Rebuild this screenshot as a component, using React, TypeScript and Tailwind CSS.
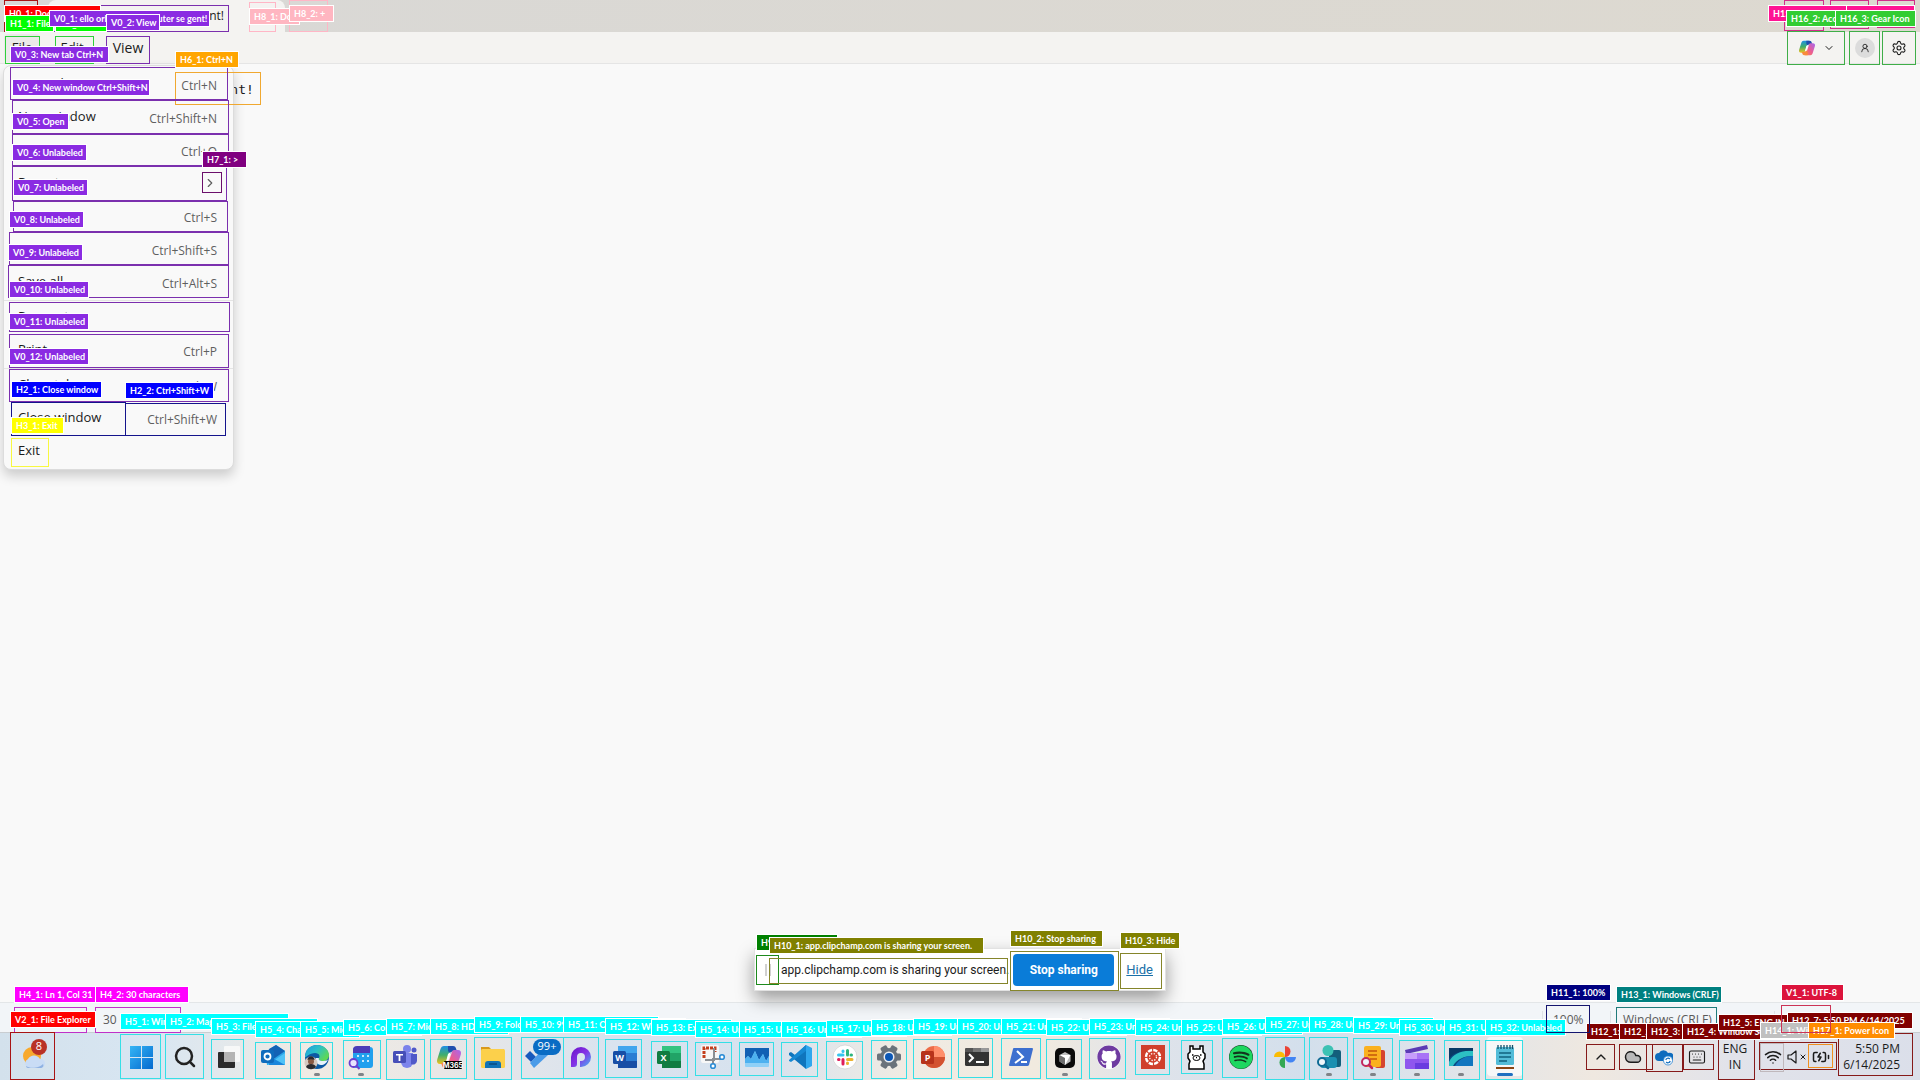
import React from "react";
import {
  ChevronDown,
  ChevronRight,
  ChevronUp,
  Cloud,
  Keyboard,
  Search,
  Settings,
  UserRound,
  Volume,
  Wifi,
  X,
  BatteryCharging,
} from "lucide-react";
import { FaGithub, FaSpotify } from "react-icons/fa";

/* ---------- Taskbar icons ---------- */

const G = ({ children }: { children: React.ReactNode }) => (
  <svg viewBox="0 0 24 24" className="h-6 w-6 overflow-visible" aria-hidden="true">
    {children}
  </svg>
);

const StartIcon = () => (
  <G>
    <defs>
      <linearGradient id="start" x1="0" y1="0" x2="1" y2="1">
        <stop offset="0" stopColor="#35b5f5" />
        <stop offset="1" stopColor="#0469cf" />
      </linearGradient>
    </defs>
    <path fill="url(#start)" d="M1 1h11v11H1zM13 1h11v11H13zM1 13h11v11H1zM13 13h11v11H13z" />
  </G>
);
const TaskViewIcon = () => (
  <G>
    <rect x="1" y="7" width="17" height="16" rx="1" fill="#2b2b2b" />
    <rect x="7" y="1" width="16" height="16" rx="1" fill="#fafafa" opacity=".85" />
    <path d="M7 7h11v10H7z" fill="#b4b4b4" />
  </G>
);
const OutlookIcon = () => (
  <G>
    <path d="M4 7 15 0l9 6v14H6z" fill="#2ba5e8" />
    <path d="m8 4 7-4 9 6-13 9z" fill="#1362b5" />
    <path d="M6 20 24 8v12z" fill="#4fc3f7" />
    <path d="M8 11 24 20H8z" fill="#1a86dc" />
    <rect x="0" y="5" width="13" height="13" rx="2" fill="#0f6cbd" />
    <circle cx="6.500" cy="11.500" r="3" fill="none" stroke="#fff" strokeWidth="1.800" />
  </G>
);
const EdgeIcon = () => (
  <G>
    <defs>
      <linearGradient id="edge" x1="0" y1="0" x2="1" y2=".6">
        <stop offset="0" stopColor="#1d9be0" />
        <stop offset=".5" stopColor="#2bc0c9" />
        <stop offset="1" stopColor="#5fd854" />
      </linearGradient>
    </defs>
    <circle cx="12" cy="12" r="12" fill="#0c59a4" />
    <path d="M0 12C0 4 6 0 12 0c7 0 12 5 12 10 0 4-3 6-6 6-3 0-5-1-4-3 1-1 1-5-4-5-6 0-9 5-10 4z" fill="url(#edge)" />
    <path d="M14 13c-1 2 1 3 4 3 3 0 5-1 5-2-1 4-4 6-7 6-4 0-6-4-5-7z" fill="#e7f3fb" />
    <circle cx="6" cy="18" r="6.500" fill="#d5c8c0" />
    <circle cx="6" cy="16.500" r="3" fill="#8a5a44" />
    <path d="M2.500 15c0-5 7-5 7 0-2-1-5-1-7 0zM1 22c1-4 9-4 10 0-3 3-7 3-10 0z" fill="#2b2b30" />
  </G>
);
const CalendarSearchIcon = () => (
  <G>
    <rect x="4" y="2" width="20" height="21" rx="3" fill="#21a0ee" />
    <path d="M4 5a4 4 0 0 1 4-4h13v7H4z" fill="#4c3bb8" />
    <g fill="#fff">
      <circle cx="9" cy="11" r="1" />
      <circle cx="14" cy="11" r="1" />
      <circle cx="19" cy="11" r="1" />
      <circle cx="14" cy="16" r="1" />
      <circle cx="19" cy="16" r="1" />
    </g>
    <circle cx="4.500" cy="18" r="4" fill="#e8e3ff" stroke="#6a3fd0" strokeWidth="1.800" />
    <path d="m7.500 21 3 3" stroke="#6a3fd0" strokeWidth="2" />
  </G>
);
const TeamsIcon = () => (
  <G>
    <circle cx="14" cy="4" r="4" fill="#7b83eb" />
    <circle cx="21" cy="5" r="2.500" fill="#5059c9" />
    <path d="M8 8h12v9a6 6 0 0 1-12 0z" fill="#7b83eb" />
    <path d="M18 9h6v7a4 4 0 0 1-6 3z" fill="#5059c9" />
    <rect x="0" y="6" width="13" height="12" rx="1.500" fill="#464eb8" />
    <path d="M3 9h7v1.600H7.400V16H5.600v-5.400H3z" fill="#fff" />
  </G>
);
const CopilotMark = () => (
  <>
    <defs>
      <linearGradient id="cpa" x1="0" y1="0" x2="0" y2="1">
        <stop offset="0" stopColor="#1f8fe5" />
        <stop offset=".5" stopColor="#3fae6b" />
        <stop offset="1" stopColor="#f2c11d" />
      </linearGradient>
      <linearGradient id="cpb" x1="1" y1="0" x2="0" y2="1">
        <stop offset="0" stopColor="#a667ef" />
        <stop offset=".55" stopColor="#ec5c90" />
        <stop offset="1" stopColor="#fb8a4b" />
      </linearGradient>
    </defs>
    <path d="M7 1h8l-2 4-4 12c-.6 2-1.600 2-3 2H3c-2.500 0-3.500-2-2.800-4.500L3.500 4C4.200 2 5.200 1 7 1z" fill="url(#cpa)" />
    <path d="M11 1h5c2 0 2.600 1 3.200 3l.6 2H17c-2 0-3 1-3.500 3L11 6z" fill="#1f4fae" />
    <path d="M17 23H9l2-4 4-12c.6-2 1.600-2 3-2h3c2.500 0 3.500 2 2.800 4.500L20.500 20c-.7 2-1.700 3-3.500 3z" fill="url(#cpb)" />
    <path d="M13 23H8c-2 0-2.600-1-3.200-3l-.6-2H7c2 0 3-1 3.500-3L13 18z" fill="#f98a3c" />
    <path d="m11 9 3-2-1.500 5-1.500 4-2 1z" fill="#fff" />
  </>
);
const M365Icon = () => (
  <G>
    <CopilotMark />
    <rect x="7" y="16" width="18" height="8" rx="1" fill="#000" />
    <text x="16" y="22.500" textAnchor="middle" fontSize="7" fontWeight="700" fill="#fff" fontFamily="Inter, sans-serif">
      M365
    </text>
  </G>
);
const FolderIcon = () => (
  <G>
    <path d="M0 2h8l2 2h13v5H0z" fill="#d99a1c" />
    <rect x="0" y="4" width="24" height="19" rx="1.500" fill="#fcd04b" />
    <path d="M4 23v-4a3 3 0 0 1 3-3h10a3 3 0 0 1 3 3v4z" fill="#1173b8" />
    <path d="M8 19h8" stroke="#0a4a80" strokeWidth="1.500" />
  </G>
);
const ToDoIcon = () => (
  <span className="relative block h-6 w-6">
    <G>
      <path d="m0 11 5-5 6 6-5 5z" fill="#195abd" />
      <path d="m5 18 12-13 6 5L9 23z" fill="#4a9be8" />
    </G>
    <span className="absolute -top-1.5 left-2 flex h-4 w-7 items-center justify-center rounded-full bg-[#0a6cc4] text-[11px] text-white">
      99+
    </span>
  </span>
);
const LoopIcon = () => (
  <G>
    <defs>
      <linearGradient id="loop" x1="0" y1="0" x2="1" y2="1">
        <stop offset="0" stopColor="#6a12c8" />
        <stop offset=".5" stopColor="#8432e6" />
        <stop offset="1" stopColor="#47b7f2" />
      </linearGradient>
    </defs>
    <path d="M2 22V12a10 10 0 1 1 10 10h-1v-6h1a4 4 0 1 0-4-4v7a3 3 0 0 1-3 3z" fill="url(#loop)" />
  </G>
);
const OfficeIcon = ({ letter, dark, mid, light }: { letter: string; dark: string; mid: string; light: string }) => (
  <G>
    <rect x="5" y="1" width="19" height="22" rx="1.500" fill={mid} />
    <path d="M5 1h19v7H5z" fill={light} />
    <path d="M5 16h19v6a1 1 0 0 1-1 1H5z" fill={dark} />
    <rect x="0" y="6" width="13" height="13" rx="1.500" fill={dark} />
    <text x="6.500" y="16" textAnchor="middle" fontSize="9" fontWeight="700" fill="#fff" fontFamily="Open Sans, sans-serif">
      {letter}
    </text>
  </G>
);
const SnipIcon = () => (
  <G>
    <rect x="0" y="0" width="18" height="18" rx="2" fill="#f7f7f7" />
    <path d="M3 13V3h11v4" fill="none" stroke="#c43e1c" strokeWidth="3" strokeDasharray="3 1" />
    <path d="M13 3v12H4M13 14h8M12 13v7" fill="none" stroke="#8a8f94" strokeWidth="2" />
    <circle cx="21" cy="12" r="2.300" fill="#fff" stroke="#2a8bd5" strokeWidth="1.600" />
    <circle cx="12" cy="21" r="2.300" fill="#fff" stroke="#2a8bd5" strokeWidth="1.600" />
  </G>
);
const MonitorIcon = () => (
  <G>
    <rect x="0" y="3" width="24" height="19" rx="1" fill="#8fd0f7" />
    <path d="M0 3h24v8l-3 5-3-7-4 6-4-9-4 8-3-3-3 3z" fill="#1160b4" />
    <path d="M0 14l3-3 3 3 4-8 4 9 4-6 3 7 3-5v7H0z" fill="#4db1f0" />
  </G>
);
const VsCodeIcon = () => (
  <G>
    <path d="M17 0 6 10 2 7 0 8v2l17 14 1-4V4z" fill="#0f75bd" />
    <path d="M0 15 17 0v6L2 17l-2-1z" fill="#1688d3" />
    <path d="m17 0 6 3v18l-6 3z" fill="#30a7ee" />
  </G>
);
const SlackIcon = () => (
  <G>
    <circle cx="12" cy="12" r="12" fill="#fff" stroke="#cfcfcf" strokeWidth=".7" />
    <g strokeWidth="3" strokeLinecap="round">
      <path d="M10 6v.5M5.500 10H10" stroke="#36c5f0" />
      <path d="M14.500 5.500V10M18 10h.5" stroke="#2eb67d" />
      <path d="M14.500 18.500V18M14.500 14.500H19" stroke="#ecb22e" />
      <path d="M10 14.500V19M5.500 14.500H6" stroke="#e01e5a" />
    </g>
  </G>
);
const SettingsAppIcon = () => (
  <G>
    <g fill="#6b737b">
      <circle cx="12" cy="12" r="9" />
      {[0, 60, 120, 180, 240, 300].map((a) => (
        <rect key={a} x="8.500" y="0" width="7" height="6" rx="1.500" transform={`rotate(${a + 30} 12 12)`} />
      ))}
    </g>
    <circle cx="12" cy="12" r="5.500" fill="#e9eef3" />
    <circle cx="12" cy="12" r="4" fill="#0c57b5" />
  </G>
);
const PowerPointIcon = () => (
  <G>
    <circle cx="13" cy="12" r="11" fill="#ed6c47" />
    <path d="M13 1a11 11 0 0 1 11 11H13z" fill="#ff8f6b" />
    <path d="M2 12h22a11 11 0 0 1-22 0z" fill="#d35230" />
    <rect x="0" y="6" width="13" height="13" rx="1.500" fill="#b7331b" />
    <text x="6.500" y="16" textAnchor="middle" fontSize="9" fontWeight="700" fill="#fff" fontFamily="Open Sans, sans-serif">
      P
    </text>
  </G>
);
const TerminalIcon = () => (
  <G>
    <rect x="0" y="3" width="24" height="18" rx="1.500" fill="#333" />
    <path d="M0 7V4.500A1.500 1.500 0 0 1 1.500 3H8v4z" fill="#555" />
    <path d="M8 3h8v4H8z" fill="#777" />
    <path d="M16 3h6.500A1.500 1.500 0 0 1 24 4.500V7h-8z" fill="#999" />
    <path d="m4 9 4 4-4 4M11 17h8" fill="none" stroke="#fff" strokeWidth="2" />
  </G>
);
const PowerShellIcon = () => (
  <G>
    <path d="M5 3h18a1 1 0 0 1 1 1l-4 16a2 2 0 0 1-2 1H1a1 1 0 0 1-1-1L4 4a1 1 0 0 1 1-1z" fill="#3d6fcf" />
    <path d="m8 6 6 6-8 6M12 17h6" fill="none" stroke="#fff" strokeWidth="2" />
  </G>
);
const CursorIcon = () => (
  <G>
    <rect x="2" y="3" width="20" height="20" rx="5" fill="#0a0a0a" />
    <path d="m12 7 5.500 3v6.500L12 20l-5.500-3.500V10z" fill="#bdbdbd" />
    <path d="M6.500 10h11L12 20z" fill="#fff" />
    <path d="m6.500 10 5.500 3v7l-5.500-3.500z" fill="#6d6d6d" />
  </G>
);
const CanvasIcon = () => (
  <G>
    <rect x="0" y="0" width="24" height="24" fill="#d03f2c" />
    <circle cx="12" cy="12" r="7" fill="none" stroke="#fff" strokeWidth="2.400" strokeDasharray="4.300 1.200" />
    <circle cx="12" cy="12" r="3.500" fill="none" stroke="#fff" strokeWidth="1.300" strokeDasharray="1.300 1.500" />
  </G>
);
const LlamaIcon = () => (
  <G>
    <path
      d="M4 24v-5l1-3-2-3V9l2-2V1h3v3h7V1h3v6l2 2v4l-2 3 1 3v5z"
      fill="#fff"
      stroke="#000"
      strokeWidth="1.500"
    />
    <ellipse cx="11.500" cy="13" rx="3.500" ry="2.500" fill="#fff" stroke="#000" />
    <path d="M7 10h1.500M15 10h1.500M11 12.500h1" stroke="#000" strokeWidth="1.300" />
  </G>
);
const PhotosIcon = () => (
  <G>
    <path d="M12 12V1a5.500 5.500 0 0 1 0 11z" fill="#ea4335" />
    <path d="M12 12h11a5.500 5.500 0 0 1-11 0z" fill="#4285f4" />
    <path d="M12 12v11a5.500 5.500 0 0 1 0-11z" fill="#34a853" />
    <path d="M12 12H1a5.500 5.500 0 0 1 11 0z" fill="#fbbc04" />
  </G>
);
const Magnifier = ({ color }: { color: string }) => (
  <>
    <circle cx="5" cy="17" r="4" fill="#eef6fb" stroke={color} strokeWidth="2" />
    <path d="m8 20 3 3" stroke={color} strokeWidth="2.500" strokeLinecap="round" />
  </>
);
const PeopleSearchIcon = () => (
  <G>
    <rect x="12" y="5" width="12" height="17" rx="2" fill="#135f7c" />
    <rect x="3" y="12" width="17" height="11" rx="3" fill="#1b8fb0" />
    <circle cx="11" cy="5.500" r="5.500" fill="#3cc2b4" />
    <Magnifier color="#0f6a94" />
  </G>
);
const DocSearchIcon = () => (
  <G>
    <rect x="14" y="5" width="10" height="18" rx="2" fill="#d6452f" />
    <rect x="3" y="1" width="17" height="21" rx="2" fill="#fbb11f" />
    <path d="M7 6h9M7 10h9M9 14h7" stroke="#c5560b" strokeWidth="1.500" />
    <Magnifier color="#c22960" />
  </G>
);
const ClipchampIcon = () => (
  <G>
    <path d="m0 5 22-5 1 4L1 9z" fill="#5b3bb5" />
    <rect x="0" y="8" width="24" height="16" rx="1.500" fill="#8f55ee" />
    <path d="M0 8h12v6H0z" fill="#c79dfb" />
    <path d="M12 8h12v6H12z" fill="#a873f6" />
    <path d="M10 18h14v6H10z" fill="#6a3be0" />
  </G>
);
const RemoteIcon = () => (
  <G>
    <rect x="0" y="3" width="24" height="18" rx="1" fill="#0a4a82" />
    <path d="M0 17C4 9 12 5 24 6v5C15 11 8 14 4 21H0z" fill="#2cc0c4" />
    <path d="M6 21C10 14 16 11 24 11v10z" fill="#1176bf" />
    <path d="M0 3h24v3C12 5 4 8 0 14z" fill="#083a66" />
  </G>
);
const NotepadIcon = () => (
  <G>
    <rect x="3" y="2" width="18" height="18" rx="1.500" fill="#53bcd8" />
    <path d="M5 0v4M8 0v4M11 0v4M14 0v4M17 0v4M19.500 0v4" stroke="#14506b" strokeWidth="1.300" />
    <path d="M6 8h12M6 12h12M6 16h8" stroke="#10627f" strokeWidth="1.600" />
    <path d="M3 22h18v2H3z" fill="#8a4513" />
  </G>
);

type App = { name: string; icon: React.ReactNode; running?: boolean; active?: boolean };

const apps: App[] = [
  { name: "Start", icon: <StartIcon /> },
  { name: "Search", icon: <Search className="h-6 w-6 text-[#222]" strokeWidth={2.500} /> },
  { name: "Task view", icon: <TaskViewIcon /> },
  { name: "Outlook", icon: <OutlookIcon /> },
  { name: "Microsoft Edge", icon: <EdgeIcon />, running: true },
  { name: "Calendar", icon: <CalendarSearchIcon />, running: true },
  { name: "Teams", icon: <TeamsIcon /> },
  { name: "Microsoft 365 Copilot", icon: <M365Icon /> },
  { name: "File Explorer", icon: <FolderIcon /> },
  { name: "To Do", icon: <ToDoIcon /> },
  { name: "Loop", icon: <LoopIcon /> },
  { name: "Word", icon: <OfficeIcon letter="W" dark="#174ea6" mid="#2b7cd3" light="#41a5ee" /> },
  { name: "Excel", icon: <OfficeIcon letter="X" dark="#107c41" mid="#21a366" light="#33c481" /> },
  { name: "Snipping Tool", icon: <SnipIcon /> },
  { name: "Monitor", icon: <MonitorIcon /> },
  { name: "Visual Studio Code", icon: <VsCodeIcon /> },
  { name: "Slack", icon: <SlackIcon /> },
  { name: "Settings", icon: <SettingsAppIcon /> },
  { name: "PowerPoint", icon: <PowerPointIcon /> },
  { name: "Terminal", icon: <TerminalIcon /> },
  { name: "PowerShell", icon: <PowerShellIcon /> },
  { name: "Cursor", icon: <CursorIcon />, running: true },
  {
    name: "GitHub Desktop",
    icon: (
      <span className="flex h-6 w-6 items-center justify-center rounded-full bg-white">
        <FaGithub className="h-6 w-6 text-[#6e3aa0]" />
      </span>
    ),
  },
  { name: "Canvas", icon: <CanvasIcon /> },
  { name: "Ollama", icon: <LlamaIcon /> },
  {
    name: "Spotify",
    icon: (
      <span className="flex h-6 w-6 items-center justify-center rounded-full bg-[#12351d]">
        <FaSpotify className="h-6 w-6 text-[#1ed760]" />
      </span>
    ),
  },
  { name: "Photos", icon: <PhotosIcon /> },
  { name: "People search", icon: <PeopleSearchIcon />, running: true },
  { name: "Document search", icon: <DocSearchIcon />, running: true },
  { name: "Clipchamp", icon: <ClipchampIcon />, running: true },
  { name: "Remote desktop", icon: <RemoteIcon />, running: true },
  { name: "Notepad", icon: <NotepadIcon />, active: true },
];

/* ---------- File menu ---------- */

type Item = { label: string; keys?: string; sub?: boolean; divider?: boolean };

const fileMenu: Item[] = [
  { label: "New tab", keys: "Ctrl+N" },
  { label: "New window", keys: "Ctrl+Shift+N" },
  { label: "Open", keys: "Ctrl+O" },
  { label: "Recent", sub: true },
  { label: "Save", keys: "Ctrl+S" },
  { label: "Save as", keys: "Ctrl+Shift+S" },
  { label: "Save all", keys: "Ctrl+Alt+S" },
  { label: "Page setup", divider: true },
  { label: "Print", keys: "Ctrl+P" },
  { label: "Close tab", keys: "Ctrl+W", divider: true },
  { label: "Close window", keys: "Ctrl+Shift+W" },
  { label: "Exit" },
];

/* ---------- Detection overlay ---------- */

type Rect = [number, number, number, number];

const tones: Record<string, [string, string]> = {
  red: ["border-[#a81414]", "bg-[#ff0000]"],
  violet: ["border-[#7b2fae]", "bg-[#8a2be2]"],
  lime: ["border-[#3fae48]", "bg-[#32cd32]"],
  green: ["border-[#2fd03a]", "bg-[#00ff00]"],
  pink: ["border-[#ffb6c6]", "bg-[#ffb6c1]"],
  hot: ["border-[#d12d8a]", "bg-[#ff1493]"],
  orange: ["border-[#f0a830]", "bg-[#ffa500]"],
  amber: ["border-[#f09020]", "bg-[#ff8c00]"],
  purple: ["border-[#6b0f6b]", "bg-[#800080]"],
  blue: ["border-[#14148c]", "bg-[#0000ff]"],
  yellow: ["border-[#f8f840]", "bg-[#ffff00]"],
  forest: ["border-[#1d8a1d]", "bg-[#008000]"],
  olive: ["border-[#85852a]", "bg-[#808000]"],
  magenta: ["border-[#c030c8]", "bg-[#ff00ff]"],
  cyan: ["border-[#35dfe6]", "bg-[#00ffff]"],
  navy: ["border-[#14146e]", "bg-[#000080]"],
  teal: ["border-[#207a7a]", "bg-[#008080]"],
  crimson: ["border-[#cc3355]", "bg-[#dc143c]"],
  maroon: ["border-[#861a1a]", "bg-[#800000]"],
  silver: ["border-[#c0b8bc]", "bg-[#c0c0c0]"],
};

// [tone, box edges (left, top, right, bottom)]
const boxes: [string, Rect][] = [
  ["red", [4, 0, 38, 32]],
  ["green", [5, 36, 40, 64]],
  ["green", [55, 36, 94, 64]],
  ["violet", [49, 5, 229, 32]],
  ["violet", [106, 36, 150, 64]],
  ["pink", [249, 2, 276, 32]],
  ["pink", [289, 0, 328, 32]],
  ["orange", [175, 72, 261, 105]],
  ["violet", [10, 67, 228, 100]],
  ["violet", [12, 100, 229, 134]],
  ["violet", [12, 134, 229, 166]],
  ["violet", [12, 166, 227, 201]],
  ["violet", [13, 201, 228, 232]],
  ["violet", [9, 232, 229, 265]],
  ["violet", [8, 265, 229, 298]],
  ["violet", [9, 302, 230, 332]],
  ["violet", [9, 334, 229, 368]],
  ["violet", [9, 369, 229, 402]],
  ["blue", [11, 402, 126, 436]],
  ["blue", [125, 403, 226, 436]],
  ["yellow", [11, 438, 49, 467]],
  ["purple", [202, 172, 222, 193]],
  ["hot", [1784, 0, 1824, 31]],
  ["hot", [1830, 0, 1869, 29]],
  ["hot", [1877, 0, 1915, 28]],
  ["lime", [1787, 31, 1845, 65]],
  ["lime", [1849, 31, 1880, 65]],
  ["lime", [1882, 31, 1916, 65]],
  ["forest", [756, 955, 779, 985]],
  ["olive", [769, 958, 1008, 984]],
  ["olive", [1010, 951, 1119, 991]],
  ["olive", [1120, 953, 1162, 989]],
  ["magenta", [14, 1007, 87, 1033]],
  ["magenta", [95, 1007, 181, 1033]],
  ["red", [10, 1032, 55, 1080]],
  ["cyan", [120, 1034, 161, 1079]],
  ["cyan", [165, 1034, 204, 1079]],
  ["cyan", [211, 1039, 244, 1079]],
  ["cyan", [255, 1042, 291, 1079]],
  ["cyan", [300, 1042, 333, 1079]],
  ["cyan", [343, 1040, 381, 1079]],
  ["cyan", [386, 1039, 425, 1080]],
  ["cyan", [430, 1039, 467, 1079]],
  ["cyan", [474, 1037, 512, 1080]],
  ["cyan", [521, 1037, 564, 1079]],
  ["cyan", [563, 1037, 599, 1079]],
  ["cyan", [605, 1039, 642, 1078]],
  ["cyan", [651, 1041, 688, 1078]],
  ["cyan", [695, 1042, 732, 1076]],
  ["cyan", [739, 1042, 774, 1076]],
  ["cyan", [781, 1042, 818, 1077]],
  ["cyan", [826, 1041, 863, 1080]],
  ["cyan", [871, 1040, 907, 1079]],
  ["cyan", [913, 1039, 952, 1079]],
  ["cyan", [958, 1038, 993, 1078]],
  ["cyan", [1001, 1038, 1041, 1079]],
  ["cyan", [1046, 1039, 1082, 1079]],
  ["cyan", [1089, 1038, 1126, 1079]],
  ["cyan", [1135, 1040, 1170, 1075]],
  ["cyan", [1181, 1040, 1213, 1074]],
  ["cyan", [1222, 1038, 1258, 1078]],
  ["cyan", [1265, 1037, 1305, 1080]],
  ["cyan", [1309, 1037, 1348, 1080]],
  ["cyan", [1353, 1038, 1393, 1080]],
  ["cyan", [1399, 1040, 1435, 1080]],
  ["cyan", [1444, 1040, 1480, 1080]],
  ["cyan", [1485, 1040, 1523, 1080]],
  ["teal", [1616, 1007, 1717, 1033]],
  ["maroon", [1586, 1044, 1615, 1070]],
  ["maroon", [1619, 1044, 1653, 1070]],
  ["maroon", [1646, 1044, 1683, 1072]],
  ["maroon", [1683, 1044, 1714, 1070]],
  ["maroon", [1718, 1034, 1755, 1080]],
  ["maroon", [1759, 1042, 1837, 1070]],
  ["maroon", [1838, 1033, 1913, 1076]],
  ["silver", [1760, 1043, 1784, 1072]],
  ["amber", [1808, 1044, 1833, 1068]],
];

// [tone, left, top, right, text]; later tags cover earlier ones
const tags: [string, number, number, number, string][] = [
  ["red", 4, 5, 101, "H0_1: Doc"],
  ["green", 5, 15, 54, "H1_1: File"],
  ["green", 55, 15, 107, "H1_2:"],
  ["violet", 49, 10, 210, "V0_1: ello orld from computer se gent!"],
  ["violet", 106, 14, 160, "V0_2: View"],
  ["violet", 10, 46, 109, "V0_3: New tab Ctrl+N"],
  ["pink", 249, 8, 300, "H8_1: Do"],
  ["pink", 289, 5, 334, "H8_2: +"],
  ["orange", 175, 51, 239, "H6_1: Ctrl+N"],
  ["violet", 12, 79, 150, "V0_4: New window Ctrl+Shift+N"],
  ["violet", 12, 113, 69, "V0_5: Open"],
  ["violet", 12, 144, 87, "V0_6: Unlabeled"],
  ["violet", 13, 179, 88, "V0_7: Unlabeled"],
  ["violet", 9, 211, 84, "V0_8: Unlabeled"],
  ["violet", 8, 244, 83, "V0_9: Unlabeled"],
  ["violet", 9, 281, 89, "V0_10: Unlabeled"],
  ["violet", 9, 313, 89, "V0_11: Unlabeled"],
  ["violet", 9, 348, 89, "V0_12: Unlabeled"],
  ["blue", 11, 381, 102, "H2_1: Close window"],
  ["blue", 125, 382, 214, "H2_2: Ctrl+Shift+W"],
  ["yellow", 11, 417, 64, "H3_1: Exit"],
  ["purple", 202, 151, 247, "H7_1: >"],
  ["hot", 1768, 5, 1847, "H15_1:"],
  ["hot", 1846, 5, 1915, "H15_3:"],
  ["lime", 1786, 10, 1836, "H16_2: Acc"],
  ["lime", 1835, 10, 1916, "H16_3: Gear Icon"],
  ["forest", 756, 934, 838, "H9_1:"],
  ["olive", 769, 937, 984, "H10_1: app.clipchamp.com is sharing your screen."],
  ["olive", 1010, 930, 1103, "H10_2: Stop sharing"],
  ["olive", 1120, 932, 1180, "H10_3: Hide"],
  ["magenta", 14, 986, 96, "H4_1: Ln 1, Col 31"],
  ["magenta", 95, 986, 189, "H4_2: 30 characters"],
  ["red", 10, 1011, 96, "V2_1: File Explorer"],
  ["cyan", 120, 1013, 170, "H5_1: Win"],
  ["cyan", 165, 1013, 289, "H5_2: Mag"],
  ["cyan", 211, 1018, 318, "H5_3: File"],
  ["cyan", 255, 1021, 330, "H5_4: Cha"],
  ["cyan", 300, 1021, 360, "H5_5: Micr"],
  ["cyan", 343, 1019, 422, "H5_6: Colo"],
  ["cyan", 386, 1018, 440, "H5_7: Micr"],
  ["cyan", 430, 1018, 509, "H5_8: HDR"],
  ["cyan", 474, 1016, 526, "H5_9: Folde"],
  ["cyan", 520, 1016, 566, "H5_10: 99"],
  ["cyan", 563, 1016, 659, "H5_11: On"],
  ["cyan", 605, 1018, 686, "H5_12: Word"],
  ["cyan", 651, 1019, 732, "H5_13: Exce"],
  ["cyan", 695, 1021, 776, "H5_14: Unla"],
  ["cyan", 739, 1021, 820, "H5_15: Unla"],
  ["cyan", 781, 1021, 862, "H5_16: Unla"],
  ["cyan", 826, 1020, 907, "H5_17: Unla"],
  ["cyan", 871, 1019, 952, "H5_18: Unla"],
  ["cyan", 913, 1018, 994, "H5_19: Unla"],
  ["cyan", 957, 1018, 1038, "H5_20: Unla"],
  ["cyan", 1001, 1018, 1082, "H5_21: Unla"],
  ["cyan", 1046, 1019, 1127, "H5_22: Unla"],
  ["cyan", 1089, 1018, 1170, "H5_23: Unla"],
  ["cyan", 1135, 1019, 1216, "H5_24: Unla"],
  ["cyan", 1181, 1019, 1262, "H5_25: Unla"],
  ["cyan", 1222, 1018, 1303, "H5_26: Unla"],
  ["cyan", 1265, 1016, 1346, "H5_27: Unla"],
  ["cyan", 1309, 1016, 1390, "H5_28: Unla"],
  ["cyan", 1353, 1017, 1434, "H5_29: Unla"],
  ["cyan", 1399, 1019, 1480, "H5_30: Unla"],
  ["cyan", 1444, 1019, 1525, "H5_31: Unla"],
  ["cyan", 1485, 1019, 1566, "H5_32: Unlabeled"],
  ["navy", 1546, 984, 1611, "H11_1: 100%"],
  ["maroon", 1586, 1023, 1621, "H12_1:"],
  ["maroon", 1619, 1023, 1648, "H12_2"],
  ["maroon", 1646, 1023, 1684, "H12_3:"],
  ["maroon", 1682, 1023, 1800, "H12_4: Window Se"],
  ["maroon", 1718, 1014, 1788, "H12_5: ENG IN"],
  ["maroon", 1787, 1012, 1913, "H12_7: 5:50 PM 6/14/2025"],
  ["teal", 1616, 986, 1722, "H13_1: Windows (CRLF)"],
  ["silver", 1760, 1022, 1812, "H14_1: Wifi"],
  ["crimson", 1781, 984, 1844, "V1_1: UTF-8"],
  ["amber", 1808, 1022, 1895, "H17_1: Power Icon"],
];

// Outlines that stay visible on top of the tags
const topBoxes: [string, Rect][] = [
  ["navy", [1546, 1005, 1590, 1033]],
  ["crimson", [1781, 1005, 1831, 1033]],
];

const Outline = ({ tone, rect: [l, t, r, b] }: { tone: string; rect: Rect }) => (
  <div
    className={`absolute border ${tones[tone][0]}`}
    style={{ left: l, top: t, width: r - l, height: b - t }}
  />
);

const Overlay = () => (
  <div className="pointer-events-none absolute inset-0 z-30 overflow-hidden">
    {boxes.map(([tone, rect], i) => (
      <Outline key={i} tone={tone} rect={rect} />
    ))}
    {tags.map(([tone, l, t, r, text], i) => (
      <div
        key={i}
        className={`absolute flex h-[17px] items-center overflow-hidden border border-white pl-1 font-[Lato,sans-serif] text-[9px] leading-none font-bold whitespace-pre text-white ${tones[tone][1]}`}
        style={{ left: l, top: t, width: r - l }}
      >
        {text}
      </div>
    ))}
    {topBoxes.map(([tone, rect], i) => (
      <Outline key={i} tone={tone} rect={rect} />
    ))}
  </div>
);

/* ---------- Page ---------- */

export default function App() {
  return (
    <div className="relative flex min-h-screen flex-col overflow-hidden bg-[#f9f9f9] font-['Open_Sans','Noto_Sans',sans-serif] text-[13px] text-[#1b1b1b]">
      <header className="flex h-8 bg-gradient-to-r from-[#d9d8d6] to-[#ddd9d0] pl-12">
        <div className="flex w-[237px] items-center rounded-t-lg bg-[#f4f3f1]">
          <div className="flex w-44 justify-end text-[12px] whitespace-nowrap">
            <span>Hello from Computer Use Agent!</span>
          </div>
        </div>
      </header>

      <div className="relative flex h-8 items-center justify-between border-b border-[#e5e5e5] bg-[#f4f3f1]">
        <nav className="flex items-center gap-2 pl-1">
          <button className="h-7 w-9 rounded bg-[#ebeae8]">File</button>
          <button className="h-7 w-12">Edit</button>
          <button className="h-7 w-12 text-[14px]">View</button>
        </nav>
        <div className="flex items-center pr-[13px]">
          <button aria-label="Copilot" className="mr-5 flex items-center gap-2">
            <svg viewBox="0 0 24 24" className="h-4 w-4">
              <CopilotMark />
            </svg>
            <ChevronDown className="h-3 w-3" strokeWidth={2} />
          </button>
          <button aria-label="Account" className="mr-4 flex h-5 w-5 items-center justify-center rounded-full bg-[#dcdcdc]">
            <UserRound className="h-2.5 w-2.5" />
          </button>
          <button aria-label="Settings">
            <Settings className="h-4 w-4" strokeWidth={1.600} />
          </button>
        </div>

        <div
          role="menu"
          className="absolute top-[33px] left-[3px] z-10 w-[231px] rounded-lg border border-[#dcdcdc] bg-[#f9f9f9] pt-[3px] shadow-[0_6px_12px_rgba(0,0,0,0.18)]"
        >
          {fileMenu.map((item) => (
            <React.Fragment key={item.label}>
              {item.divider && <div className="mb-px h-px bg-[#e4e4e4]" />}
              <button role="menuitem" className="flex h-[33px] w-full items-center justify-between pr-4 pl-3.5 text-left">
                <span className="pb-1">{item.label}</span>
                {item.keys && <span className="text-[12px] text-[#5f5f5f]">{item.keys}</span>}
                {item.sub && <ChevronRight className="mb-1 h-3.5 w-3.5 text-[#5f5f5f]" strokeWidth={2} />}
              </button>
            </React.Fragment>
          ))}
        </div>
      </div>

      <main className="flex-1 px-[19px] pt-4">
        <p className="font-['DejaVu_Sans_Mono',monospace] text-[13px] leading-5">Hello from Computer Use Agent!</p>
      </main>

      <footer className="flex h-[30px] items-center justify-between border-t border-[#e3e6e8] bg-[#f2f5f8] pt-1 text-[12px] text-[#5a5a5a]">
        <div className="flex gap-5 pl-4">
          <span className="w-[67px] whitespace-nowrap">Ln 1, Col 31</span>
          <span>30 characters</span>
        </div>
        <div className="flex items-center pr-3">
          <span className="w-[68px] border-l border-[#dfe2e5] pl-2.5">100%</span>
          <span className="w-[164px] border-l border-[#dfe2e5] pl-3">Windows (CRLF)</span>
          <span className="w-[134px] border-l border-[#dfe2e5] pl-3">UTF-8</span>
        </div>
      </footer>

      <div className="flex h-12 items-center border-t border-[#c9cdd1] bg-[linear-gradient(90deg,#d3e1ec_0%,#d8e6f2_8%,#f0ebe4_16%,#e9e7e6_23%,#d9e3ef_32%,#d7e2ee_40%,#f0ebe3_47%,#f1eadf_54%,#dfe3ea_60%,#d3dfec_68%,#dfe4ea_75%,#efe8e0_83%,#e2e3ea_90%,#dbdfea_100%)]">
        <div className="flex w-[119px] pl-[21px]">
          <button aria-label="Weather" className="relative">
            <svg viewBox="0 0 26 28" className="h-7 w-[26px]" aria-hidden="true">
              <circle cx="11" cy="13" r="9" fill="#f8a92c" />
              <path d="M7 25a5 5 0 0 1 0-9 7 7 0 0 1 12 0 4.500 4.500 0 0 1 1 9z" fill="#c9dcf5" />
              <path d="M5 23c4 3 14 2 17-2 1 2 0 4-3 4H7c-1 0-2-1-2-2z" fill="#8fb2e3" />
            </svg>
            <span className="absolute -top-1 left-2.5 flex h-4 w-4 items-center justify-center rounded-full bg-[#b93226] text-[11px] text-white">
              8
            </span>
          </button>
        </div>
        <nav className="flex h-full">
          {apps.map((a) => (
            <button
              key={a.name}
              aria-label={a.name}
              className="relative flex h-full w-11 items-center justify-center"
            >
              {a.active && <span className="absolute inset-x-1 top-1 bottom-1 rounded bg-white/70" />}
              <span className="relative">{a.icon}</span>
              {a.running && <span className="absolute bottom-1 h-[3px] w-1.5 rounded-full bg-[#808387]" />}
              {a.active && <span className="absolute bottom-1 h-[3px] w-4 rounded-full bg-[#1f6fc0]" />}
            </button>
          ))}
        </nav>
        <div className="ml-auto flex h-full items-center pr-5 text-[#1b1b1b]">
          <button aria-label="Show hidden icons" className="mr-[15px]">
            <ChevronUp className="h-4 w-4" strokeWidth={2} />
          </button>
          <button aria-label="Cloud" className="mr-[13px]">
            <Cloud className="h-[18px] w-[18px] fill-[#b9b9b9]" strokeWidth={2} />
          </button>
          <button aria-label="OneDrive" className="mr-[15px]">
            <svg viewBox="0 0 18 18" className="h-[18px] w-[18px]" aria-hidden="true">
              <path d="M4 13a4 4 0 0 1 0-8 5 5 0 0 1 9 0 4 4 0 0 1 3 8z" fill="#0f6cbd" />
              <circle cx="13" cy="12.500" r="4.500" fill="#fff" stroke="#1f7fd0" strokeWidth=".8" />
              <path d="M10.800 12a2.300 2.300 0 0 1 4-1M15.200 13a2.300 2.300 0 0 1-4 1" fill="none" stroke="#0f6cbd" strokeWidth="1.200" />
            </svg>
          </button>
          <button aria-label="Touch keyboard" className="mr-[15px]">
            <Keyboard className="h-[18px] w-[18px]" strokeWidth={1.500} />
          </button>
          <button className="mr-[15px] w-7 text-center text-[12px] leading-4">
            ENG
            <br />
            IN
          </button>
          <button aria-label="Network, volume and battery" className="mr-2 flex items-center gap-[5px]">
            <Wifi className="h-[18px] w-[18px]" strokeWidth={2} />
            <span className="flex items-center">
              <svg viewBox="0 0 12 16" className="h-4 w-3" aria-hidden="true">
                <path d="M1 6h3l5-4v12l-5-4H1z" fill="none" stroke="#1b1b1b" strokeWidth="1.200" strokeLinejoin="round" />
              </svg>
              <X className="h-2 w-2" strokeWidth={3} />
            </span>
            <BatteryCharging className="h-[18px] w-[18px]" strokeWidth={2} />
          </button>
          <button className="w-[62px] text-right text-[12px] leading-4 whitespace-nowrap">
            5:50 PM
            <br />
            6/14/2025
          </button>
        </div>
      </div>

      <div className="absolute bottom-[89px] left-1/2 z-20 flex h-[43px] w-[412px] -translate-x-1/2 items-center border border-[#e2e2e2] bg-white pr-3 pl-2.5 font-[Roboto,sans-serif] shadow-[0_8px_18px_rgba(0,0,0,0.38)]">
        <span className="mr-2.5 h-3 w-1.5 shrink-0 border-x-2 border-[#d0d0d0]" />
        <span className="flex-1 text-[12px] whitespace-nowrap">app.clipchamp.com is sharing your screen.</span>
        <button className="mr-3 h-8 w-[101px] shrink-0 rounded bg-[#0a7cd8] text-[12px] font-bold text-white">
          Stop sharing
        </button>
        <a href="#hide" className="text-[13px] text-[#1a6fa8] underline">
          Hide
        </a>
      </div>

      <Overlay />
    </div>
  );
}
